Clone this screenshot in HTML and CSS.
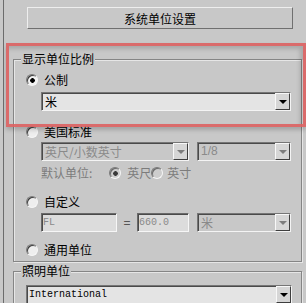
FILE: index.html
```html
<!DOCTYPE html>
<html>
<head>
<meta charset="utf-8">
<link rel="stylesheet" href="styles.css">
</head>
<body>
<div class="window">
  <div class="sysbtn">系统单位设置</div>

  <div class="group g1">
    <div class="legend">显示单位比例</div>
    <div class="row r-metric"><span class="radio checked"></span><span>公制</span></div>
    <div class="combo c-mi"><span class="val">米</span><span class="drop"></span></div>

    <div class="row r-us"><span class="radio"></span><span>美国标准</span></div>
    <div class="line l-us">
      <div class="combo dis w148"><span class="val">英尺/小数英寸</span><span class="drop"></span></div>
      <div class="combo dis w94"><span class="val latin">1/8</span><span class="drop"></span></div>
    </div>
    <div class="row r-def">
      <span class="distext deflabel">默认单位:</span>
      <span class="radio dis checked r-ft"></span><span class="distext">英尺</span>
      <span class="radio dis r-in"></span><span class="distext">英寸</span>
    </div>

    <div class="row r-custom"><span class="radio"></span><span>自定义</span></div>
    <div class="line l-custom">
      <div class="field w76"><span class="mono">FL</span></div>
      <span class="eq">=</span>
      <div class="field w52"><span class="mono">660.0</span></div>
      <div class="combo dis w94 gapl"><span class="val">米</span><span class="drop"></span></div>
    </div>

    <div class="row r-generic"><span class="radio"></span><span>通用单位</span></div>
  </div>

  <div class="group g2">
    <div class="legend">照明单位</div>
    <div class="combo c-intl"><span class="val mono dark">International</span><span class="drop"></span></div>
  </div>

  <div class="highlight"></div>
</div>
</body>
</html>
```

FILE: styles.css
```css
html, body {
  margin: 0;
  padding: 0;
  background: #c8c8c8;
}
body {
  font-family: "Noto Sans CJK SC", "Noto Sans", sans-serif;
  font-size: 12px;
  color: #000;
  overflow: hidden;
}
.window {
  position: relative;
  height: 303px;
  margin-left: 3px;
  border-left: 1px solid #6c6c6c;
  padding-top: 7px;
  box-sizing: border-box;
  overflow: hidden;
}
.sysbtn {
  margin-left: 23px;
  width: 266px;
  height: 22px;
  box-sizing: border-box;
  border: 1px solid;
  border-color: #eeeeee #707070 #707070 #eeeeee;
  display: flex;
  align-items: center;
  justify-content: center;
  line-height: 14px;
  padding-top: 1px;
}
.group {
  margin-left: 9px;
  width: 289px;
  box-sizing: border-box;
  border: 1px solid #858585;
  box-shadow: inset 1px 1px 0 #e6e6e6, 1px 1px 0 #e6e6e6;
}
.g1 {
  margin-top: 30px;
  height: 203px;
}
.g2 {
  margin-top: 9px;
  height: 60px;
}
.legend {
  width: max-content;
  margin: -8px 0 0 7px;
  padding: 0 1px;
  background: #c8c8c8;
  height: 14px;
  line-height: 14px;
}
.row {
  display: flex;
  align-items: center;
  height: 16px;
  line-height: 16px;
  padding-left: 12px;
  gap: 6px;
}
.r-metric { margin-top: 6px; }
.r-us { margin-top: 13px; }
.r-def { margin-top: 4px; padding-left: 27px; gap: 0; }
.r-custom { margin-top: 13px; }
.r-generic { margin-top: 10px; }

.deflabel { margin-right: 17px; }
.r-ft { margin-right: 6px; }
.r-in { margin-right: 4px; }
.distext { color: #7c7c7c; }

.radio {
  flex: none;
  width: 12px;
  height: 12px;
  box-sizing: border-box;
  border-radius: 50%;
  border: 1px solid;
  border-color: #7a7a7a #f6f6f6 #f6f6f6 #7a7a7a;
  box-shadow: inset 1px 1px 0 #3c3c3c;
  background: #eeeeee;
}
.radio.checked {
  background: radial-gradient(circle at 55% 55%, #000 0 2px, #f2f2f2 2.6px);
}
.radio.dis {
  background: #cdcdcd;
  box-shadow: inset 1px 1px 0 #6a6a6a;
}
.radio.dis.checked {
  background: radial-gradient(circle at 55% 55%, #3a3a3a 0 2px, #cdcdcd 2.6px);
}

.line {
  display: flex;
  align-items: center;
  margin-left: 27px;
}
.l-us { margin-top: 2px; gap: 8px; }
.l-custom { margin-top: 3px; }

.combo {
  display: flex;
  height: 19px;
  box-sizing: border-box;
  border: 1px solid;
  border-color: #767676 #f4f4f4 #f4f4f4 #767676;
  box-shadow: inset 1px 1px 0 #4a4a4a;
  background: #e4e4e4;
}
.combo .val {
  flex: 1;
  padding-left: 3px;
  line-height: 17px;
  white-space: nowrap;
  overflow: hidden;
}
.combo.dis {
  background: #c8c8c8;
}
.combo.dis .val { color: #8a8a8a; }
.c-mi {
  margin: 4px 0 0 27px;
  width: 250px;
}
.c-intl {
  margin: 7px 0 0 12px;
  width: 266px;
}
.w148 { width: 148px; }
.w94 { width: 94px; }
.w76 { width: 76px; }
.w52 { width: 52px; }
.gapl { margin-left: 8px; }

.drop {
  flex: none;
  width: 15px;
  box-sizing: border-box;
  border: 1px solid;
  border-color: #f8f8f8 #3e3e3e #3e3e3e #f8f8f8;
  background: #d6d6d6;
  display: flex;
  align-items: center;
  justify-content: center;
}
.drop::after {
  content: "";
  width: 0;
  height: 0;
  border-left: 4px solid transparent;
  border-right: 4px solid transparent;
  border-top: 4px solid #000;
  margin-top: 1px;
}
.combo.dis .drop::after {
  border-top-color: #7c7c7c;
}

.field {
  height: 19px;
  box-sizing: border-box;
  border: 1px solid;
  border-color: #6a6a6a #f6f6f6 #f6f6f6 #6a6a6a;
  box-shadow: inset 1px 1px 0 #4a4a4a;
  background: #dcdcdc;
  display: flex;
  align-items: center;
  padding-left: 1px;
}
.eq {
  width: 20px;
  text-align: center;
  color: #555;
  font-family: "Liberation Sans", sans-serif;
}
.mono {
  font-family: "Liberation Mono", "DejaVu Sans Mono", monospace;
  font-size: 10px;
  color: #8a8a8a;
}
.combo .val.mono { line-height: 17px; }
.mono.dark { color: #000; padding-left: 2px; }
.latin {
  font-family: "Liberation Sans", sans-serif;
}

.highlight {
  position: absolute;
  left: 2px;
  top: 43px;
  width: 300px;
  height: 84px;
  box-sizing: border-box;
  border: 3px solid rgba(220, 96, 96, 0.9);
  box-shadow: inset -3px 3px 4px rgba(0, 0, 0, 0.16), 0 3px 4px rgba(0, 0, 0, 0.18);
  pointer-events: none;
}
```
